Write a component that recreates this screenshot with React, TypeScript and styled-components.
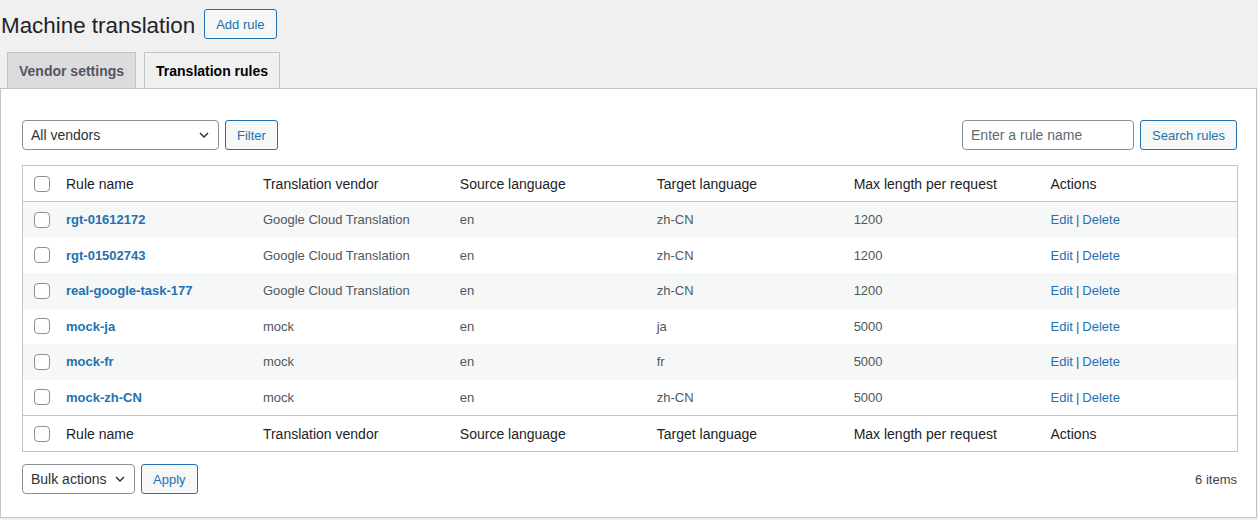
import React from "react";
import styled, { createGlobalStyle } from "styled-components";

const GlobalStyle = createGlobalStyle`
  html, body {
    margin: 0;
    padding: 0;
    background: #f0f0f1;
    font-family: "Liberation Sans", Arial, sans-serif;
    color: #3c434a;
  }
`;

const Page = styled.div`
  width: 1258px;
  height: 520px;
  overflow: hidden;
`;

const Header = styled.div`
  display: flex;
  align-items: center;
  gap: 9px;
  height: 48px;
  padding-left: 1px;
`;

const Title = styled.h1`
  margin: 3px 0 0;
  font-size: 22.4px;
  font-weight: 400;
  color: #1d2327;
  line-height: 1.3;
`;

const Button = styled.button`
  height: 30px;
  padding: 0 11px;
  font-family: inherit;
  font-size: 13px;
  color: #2271b1;
  background: #f6f7f7;
  border: 1px solid #2271b1;
  border-radius: 3px;
  cursor: pointer;
  box-sizing: border-box;
`;

const Tabs = styled.div`
  display: flex;
  gap: 8px;
  padding-left: 7px;
  margin-top: 4px;
  height: 36px;
`;

const Tab = styled.div<{ $active?: boolean }>`
  display: flex;
  align-items: center;
  padding: 0 11px;
  font-size: 14px;
  font-weight: 600;
  border: 1px solid #c3c4c7;
  border-bottom: none;
  box-sizing: border-box;
  background: ${(p) => (p.$active ? "#f0f0f1" : "#dcdcde")};
  color: ${(p) => (p.$active ? "#000" : "#50575e")};
`;

const Panel = styled.div`
  background: #fff;
  border: 1px solid #c3c4c7;
  width: 1257px;
  height: 430px;
  box-sizing: border-box;
  padding: 31px 19px 0 21px;
`;

const Toolbar = styled.div`
  display: flex;
  align-items: center;
  justify-content: space-between;
  height: 30px;
`;

const Group = styled.div`
  display: flex;
  align-items: center;
  gap: 6px;
`;

const SelectBox = styled.div<{ $w: number }>`
  display: flex;
  align-items: center;
  justify-content: space-between;
  width: ${(p) => p.$w}px;
  height: 30px;
  box-sizing: border-box;
  padding: 0 6px 0 8px;
  border: 1px solid #8c8f94;
  border-radius: 4px;
  font-size: 14px;
  color: #2c3338;
  background: #fff;
`;

const SearchInput = styled.input`
  width: 172px;
  height: 30px;
  box-sizing: border-box;
  padding: 0 8px;
  border: 1px solid #8c8f94;
  border-radius: 4px;
  font-family: inherit;
  font-size: 14px;
  color: #2c3338;
  &::placeholder {
    color: #646970;
  }
`;

const Table = styled.table`
  width: 1216px;
  margin-top: 15px;
  border: 1px solid #c3c4c7;
  border-collapse: collapse;
  table-layout: fixed;
`;

const Th = styled.th<{ $check?: boolean }>`
  text-align: left;
  font-weight: 400;
  font-size: 14px;
  color: #1d2327;
  height: 35px;
  padding: 0 10px;
  width: ${(p) => (p.$check ? "13px" : "auto")};
`;

const HeadRow = styled.tr<{ $foot?: boolean }>`
  border-${(p) => (p.$foot ? "top" : "bottom")}: 1px solid #c3c4c7;
`;

const Row = styled.tr<{ $alt?: boolean }>`
  background: ${(p) => (p.$alt ? "#f6f7f7" : "#fff")};
`;

const Td = styled.td`
  font-size: 13px;
  color: #50575e;
  height: 35.5px;
  padding: 0 10px;
`;

const RuleLink = styled.a`
  color: #2271b1;
  font-weight: 600;
  text-decoration: none;
`;

const ActionLink = styled.a`
  color: #2271b1;
  text-decoration: none;
`;

const Sep = styled.span`
  color: #50575e;
  margin: 0 3px;
`;

const Check = styled.span`
  display: block;
  width: 16px;
  height: 16px;
  box-sizing: border-box;
  border: 1px solid #8c8f94;
  border-radius: 4px;
  background: #fff;
  margin-left: 1px;
`;

const Bottom = styled.div`
  display: flex;
  align-items: center;
  justify-content: space-between;
  margin-top: 12px;
`;

const Count = styled.span`
  font-size: 13px;
  color: #3c434a;
`;

const Chevron = () => (
  <svg width="16" height="16" viewBox="0 0 16 16" fill="none">
    <path d="M4 6l4 4 4-4" stroke="#2c3338" strokeWidth="1.5" />
  </svg>
);

const rules = [
  ["rgt-01612172", "Google Cloud Translation", "en", "zh-CN", "1200"],
  ["rgt-01502743", "Google Cloud Translation", "en", "zh-CN", "1200"],
  ["real-google-task-177", "Google Cloud Translation", "en", "zh-CN", "1200"],
  ["mock-ja", "mock", "en", "ja", "5000"],
  ["mock-fr", "mock", "en", "fr", "5000"],
  ["mock-zh-CN", "mock", "en", "zh-CN", "5000"],
];

const headers = [
  "Rule name",
  "Translation vendor",
  "Source language",
  "Target language",
  "Max length per request",
  "Actions",
];

const HeaderCells = () => (
  <>
    <Th $check>
      <Check />
    </Th>
    {headers.map((h) => (
      <Th key={h}>{h}</Th>
    ))}
  </>
);

export default function App() {
  return (
    <Page>
      <GlobalStyle />
      <Header>
        <Title>Machine translation</Title>
        <Button>Add rule</Button>
      </Header>
      <Tabs>
        <Tab>Vendor settings</Tab>
        <Tab $active>Translation rules</Tab>
      </Tabs>
      <Panel>
        <Toolbar>
          <Group>
            <SelectBox $w={197}>
              All vendors
              <Chevron />
            </SelectBox>
            <Button>Filter</Button>
          </Group>
          <Group>
            <SearchInput placeholder="Enter a rule name" />
            <Button>Search rules</Button>
          </Group>
        </Toolbar>
        <Table>
          <thead>
            <HeadRow>
              <HeaderCells />
            </HeadRow>
          </thead>
          <tbody>
            {rules.map((r, i) => (
              <Row key={r[0]} $alt={i % 2 === 0}>
                <Td>
                  <Check />
                </Td>
                <Td>
                  <RuleLink href="#">{r[0]}</RuleLink>
                </Td>
                <Td>{r[1]}</Td>
                <Td>{r[2]}</Td>
                <Td>{r[3]}</Td>
                <Td>{r[4]}</Td>
                <Td>
                  <ActionLink href="#">Edit</ActionLink>
                  <Sep>|</Sep>
                  <ActionLink href="#">Delete</ActionLink>
                </Td>
              </Row>
            ))}
          </tbody>
          <tfoot>
            <HeadRow $foot>
              <HeaderCells />
            </HeadRow>
          </tfoot>
        </Table>
        <Bottom>
          <Group>
            <SelectBox $w={113}>
              Bulk actions
              <Chevron />
            </SelectBox>
            <Button>Apply</Button>
          </Group>
          <Count>6 items</Count>
        </Bottom>
      </Panel>
    </Page>
  );
}
